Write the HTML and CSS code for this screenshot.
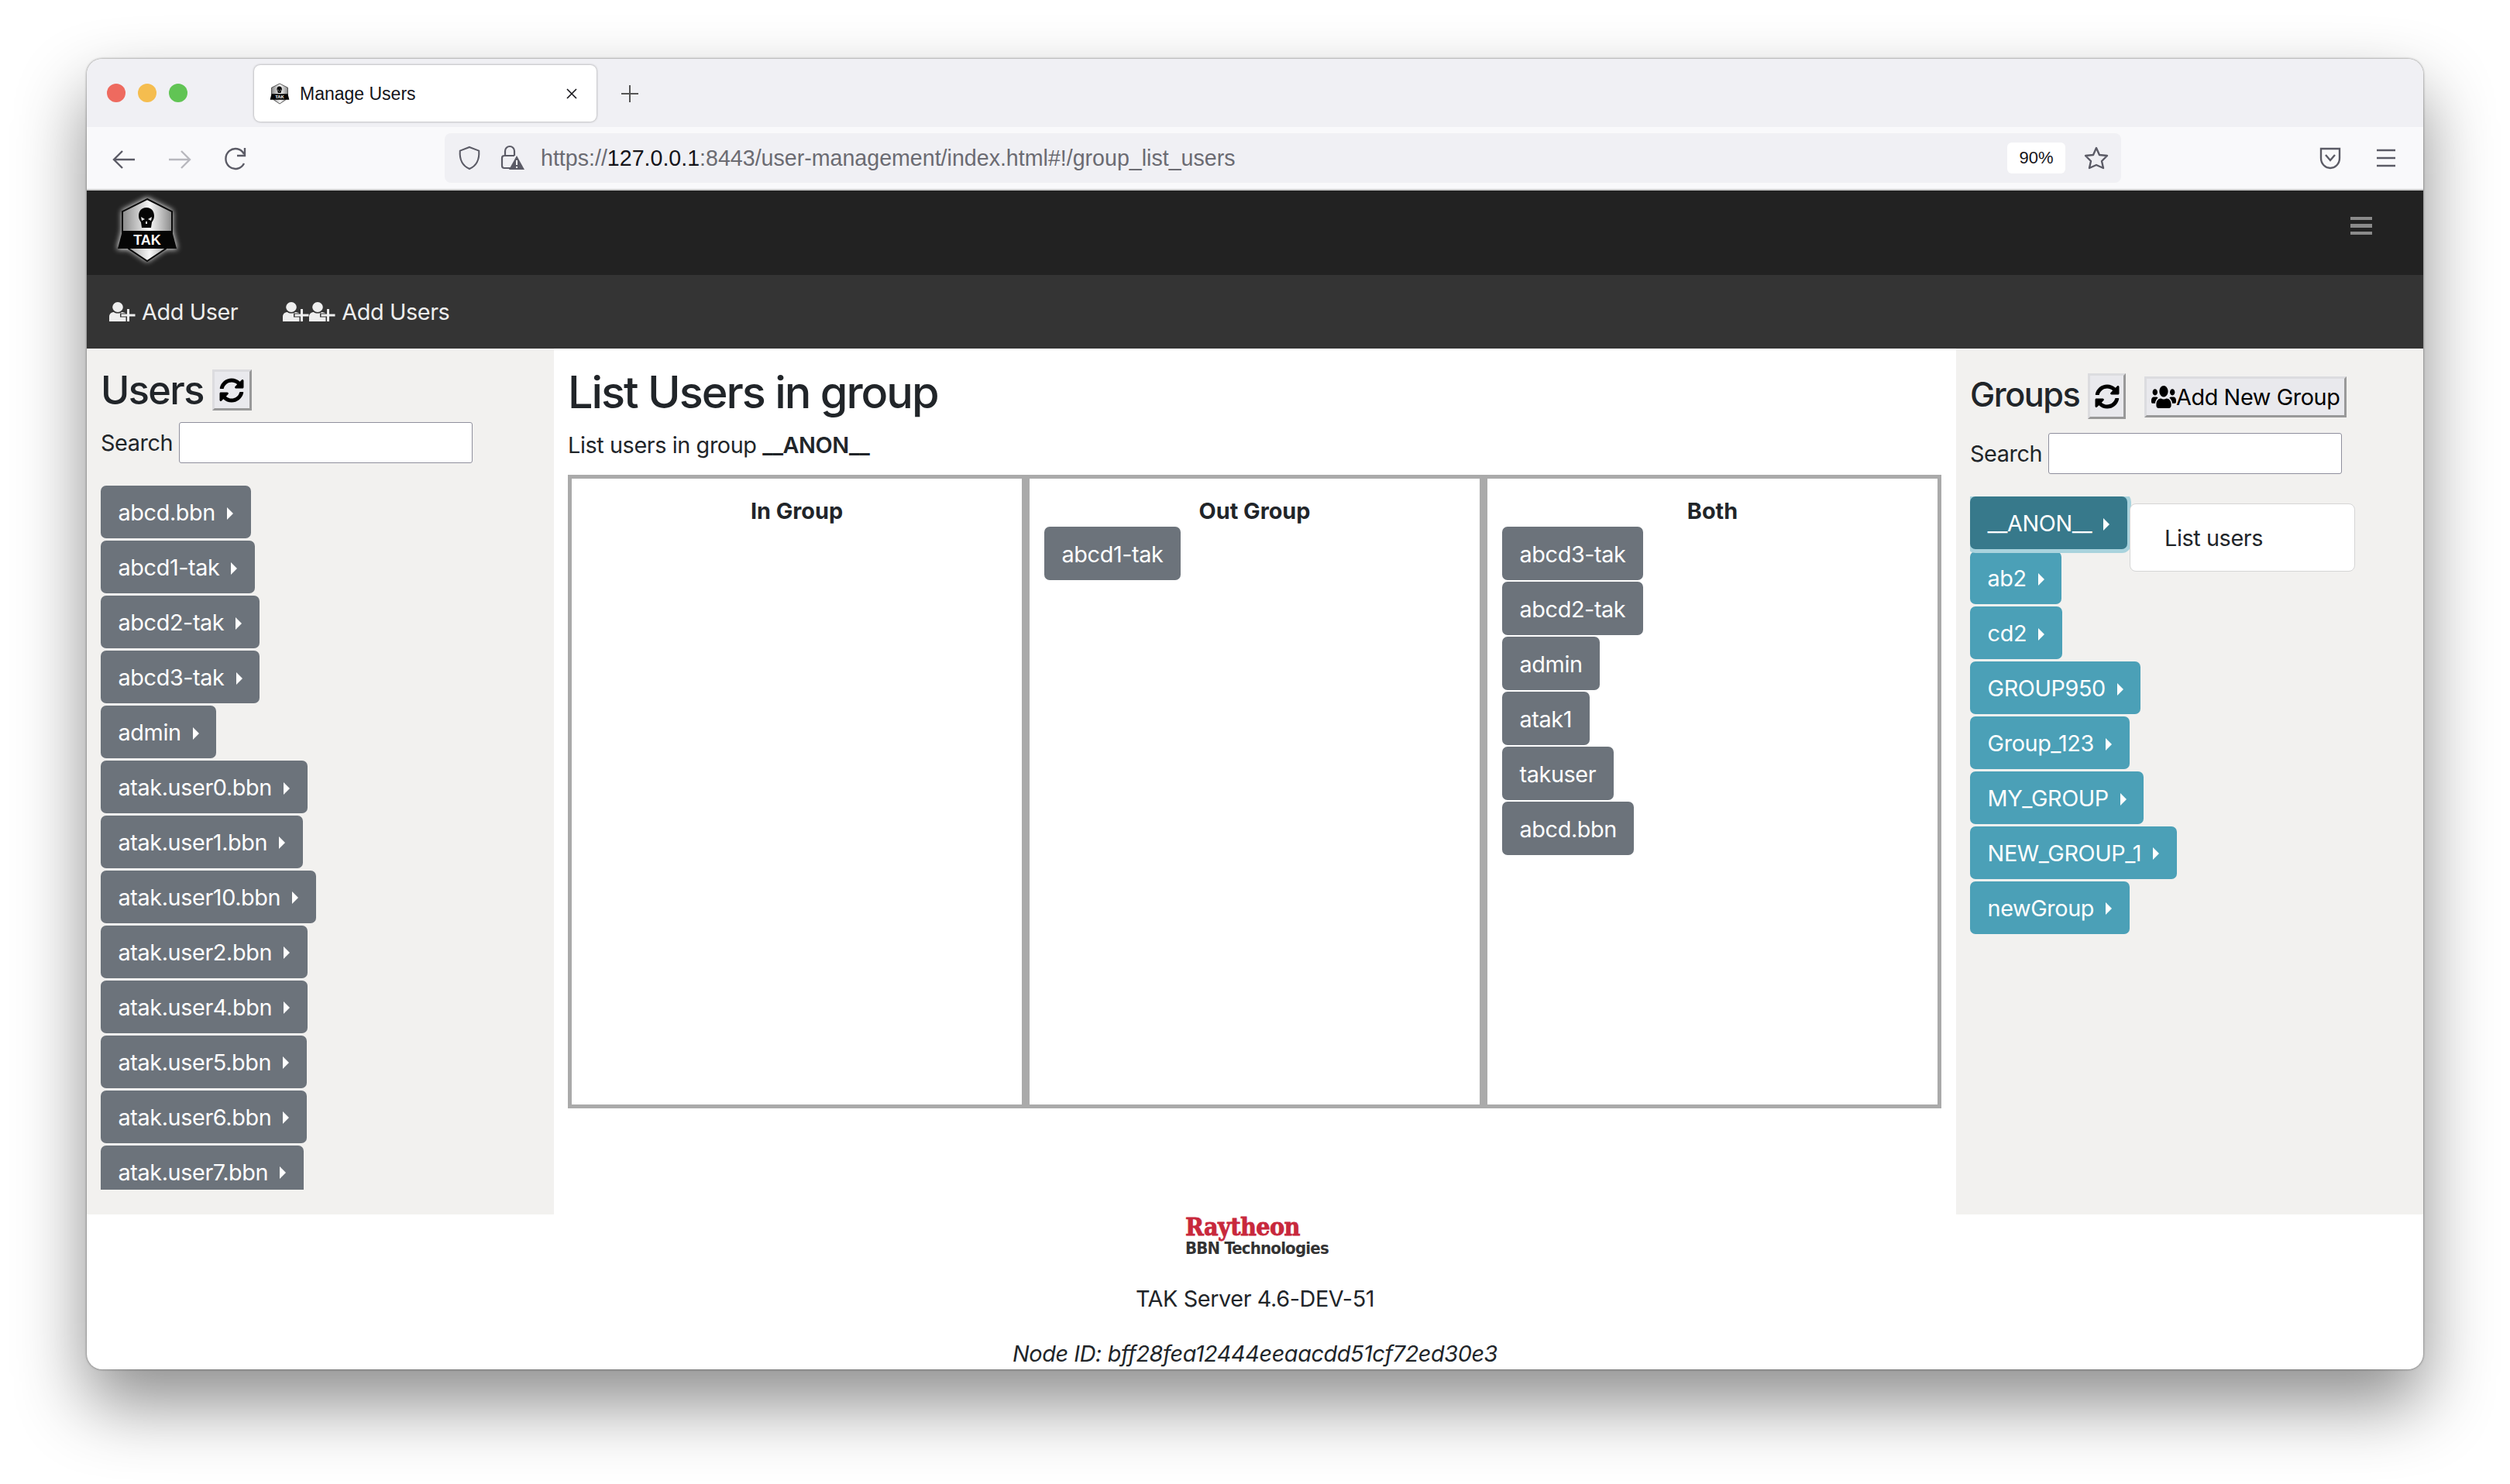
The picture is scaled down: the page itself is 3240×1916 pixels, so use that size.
FILE: index.html
```html
<!DOCTYPE html>
<html lang="en">
<head>
    <meta charset="UTF-8">
    <title>Manage Users</title>
    <link rel="stylesheet" href="styles.css">
</head>
<body>
<svg class="sprites" width="0" height="0">
    <defs>
        <linearGradient id="shield-fill" x1="0" y1="0" x2="1" y2="0">
            <stop offset="0" stop-color="#8a8a8a"/>
            <stop offset=".55" stop-color="#f8f8f8"/>
            <stop offset="1" stop-color="#8a8a8a"/>
        </linearGradient>
        <filter id="logo-glow" x="-30%" y="-30%" width="160%" height="160%">
            <feGaussianBlur stdDeviation="3.5"/>
        </filter>
        <symbol id="i-refresh" viewBox="0 0 512 512"><path d="M370.72 133.28C339.458 104.008 298.888 87.962 255.848 88c-77.458.068-144.328 53.178-162.791 126.85-1.344 5.363-6.122 9.15-11.651 9.15H24.103c-7.498 0-13.194-6.807-11.807-14.176C33.933 94.924 134.813 8 256 8c66.448 0 126.791 26.136 171.315 68.685L463.03 40.97C478.149 25.851 504 36.559 504 57.941V192c0 13.255-10.745 24-24 24H345.941c-21.382 0-32.09-25.851-16.971-40.971l41.75-41.749zM32 296h134.059c21.382 0 32.09 25.851 16.971 40.971l-41.75 41.75c31.262 29.273 71.835 45.319 114.876 45.28 77.418-.07 144.315-53.144 162.787-126.849 1.344-5.363 6.122-9.15 11.651-9.15h57.304c7.498 0 13.194 6.807 11.807 14.176C478.067 417.076 377.187 504 256 504c-66.448 0-126.791-26.136-171.315-68.685L48.97 471.03C33.851 486.149 8 475.441 8 454.059V320c0-13.255 10.745-24 24-24z"/></symbol>
        <symbol id="i-user-plus" viewBox="0 0 34 25">
            <ellipse cx="11" cy="6.5" rx="6.8" ry="6.5"/>
            <path d="M0 25 V19 C0 15 3 13 6 13 C8 15 14 15 16 13 C18 13 20 13.5 21 14.5 H14 V19.5 H21.5 V25 Z"/>
            <path d="M23 9 h3 v6.5 h7.5 v3 h-7.5 v6.5 h-3 v-6.5 h-7.5 v-3 h7.5 z"/>
        </symbol>
        <symbol id="i-users" viewBox="0 0 640 512" preserveAspectRatio="none"><path d="M96 224c35.3 0 64-28.7 64-64s-28.7-64-64-64-64 28.7-64 64 28.7 64 64 64zm448 0c35.3 0 64-28.7 64-64s-28.7-64-64-64-64 28.7-64 64 28.7 64 64 64zm32 32h-64c-17.6 0-33.5 7.1-45.1 18.6 40.3 22.1 68.9 62 75.1 109.4h66c17.7 0 32-14.3 32-32v-32c0-35.3-28.7-64-64-64zm-256 0c61.9 0 112-50.1 112-112S381.9 32 320 32 208 82.1 208 144s50.1 112 112 112zm76.8 32h-8.3c-20.8 10-43.9 16-68.5 16s-47.6-6-68.5-16h-8.3C179.6 288 128 339.6 128 403.2V432c0 26.5 21.5 48 48 48h288c26.5 0 48-21.5 48-48v-28.8c0-63.6-51.6-115.2-115.2-115.2zm-223.7-13.4C161.5 263.1 145.6 256 128 256H64c-35.3 0-64 28.7-64 64v32c0 17.7 14.3 32 32 32h65.9c6.3-47.4 34.9-87.3 75.2-109.4z"/></symbol>
        <symbol id="i-tak" viewBox="-8 -8 92 98">
            <path d="M38 -1 L71 16 L71 42 L77 66 L62 66 L38 82 L14 66 L-1 66 L5 42 L5 16 Z" fill="#fff" filter="url(#logo-glow)" opacity=".9"/>
            <path d="M38 1 L70 17 L70 44 L62 65 L38 81 L14 65 L6 44 L6 17 Z" fill="url(#shield-fill)" stroke="#0a0a0a" stroke-width="2"/>
            <path d="M37 12 C30 12 27 17 27 23 C27 27 29 29 30 31 L31 38 L43 38 L44 31 C45 29 47 27 47 23 C47 17 44 12 37 12 Z" fill="#050505"/>
            <path d="M30 24 L35 27 L31 29 Z M44 24 L39 27 L43 29 Z" fill="#e4e4e4"/>
            <path d="M36 30 L38 30 L38 33 L36 33 Z" fill="#e4e4e4"/>
            <path d="M6 42 L70 42 L76 65 L0 65 Z" fill="#050505"/>
            <text x="38" y="60" class="logo-tak">TAK</text>
        </symbol>
    </defs>
</svg>

<div class="window">
    <div class="tabbar">
        <div class="lights">
            <span class="light light--red"></span>
            <span class="light light--yellow"></span>
            <span class="light light--green"></span>
        </div>
        <div class="tab">
            <svg class="tab__icon"><use href="#i-tak"/></svg>
            <span class="tab__title">Manage Users</span>
            <svg class="tab__close" viewBox="0 0 16 16"><path d="M2 2 L14 14 M14 2 L2 14"/></svg>
        </div>
        <svg class="tab__new" viewBox="0 0 24 24"><path d="M12 1 V23 M1 12 H23"/></svg>
    </div>

    <div class="toolbar">
        <svg class="tool tool--back" viewBox="0 0 32 32"><path d="M30 16 H3 M14 5 L3 16 L14 27"/></svg>
        <svg class="tool tool--forward" viewBox="0 0 32 32"><path d="M2 16 H29 M18 5 L29 16 L18 27"/></svg>
        <svg class="tool tool--reload" viewBox="0 0 32 32"><path d="M27 21 A12.5 13 0 1 1 27 9 M28 1 V11 H18"/></svg>
        <div class="urlbar">
            <svg class="urlbar__shield" viewBox="0 0 32 34"><path d="M16 2 L29 7 C30 20 25 28 16 32 C7 28 2 20 3 7 Z"/></svg>
            <svg class="urlbar__lock" viewBox="0 0 32 34">
                <path class="lock-line" d="M7 14 V8 A6 6 0 0 1 19 8 V14 M14 30 H6 A3 3 0 0 1 3 27 V17 A3 3 0 0 1 6 14 H19"/>
                <path class="lock-warn" d="M22 14 L32 32 H12 Z"/>
                <path class="lock-mark" d="M22 20 V26 M22 28 V30"/>
            </svg>
            <span class="urlbar__text">https://<b class="urlbar__host">127.0.0.1</b>:8443/user-management/index.html#!/group_list_users</span>
            <span class="urlbar__zoom">90%</span>
            <svg class="urlbar__star" viewBox="0 0 32 32"><path d="M16 3 L20 12 L30 13 L23 20 L25 29 L16 25 L7 29 L9 20 L2 13 L12 12 Z"/></svg>
        </div>
        <svg class="tool tool--pocket" viewBox="0 0 32 32"><path d="M4 4 H28 V16 C28 24 22 29 16 29 C10 29 4 24 4 16 Z M10 12 L16 19 L22 12"/></svg>
        <svg class="tool tool--menu" viewBox="0 0 32 32"><path d="M4 6 H28 M4 16 H28 M4 26 H28"/></svg>
    </div>

    <nav class="navbar">
        <svg class="navbar__logo"><use href="#i-tak"/></svg>
        <div class="navbar__toggle"><span></span><span></span><span></span></div>
    </nav>
    <div class="subnav">
        <a class="subnav__link"><svg class="icon-user"><use href="#i-user-plus"/></svg> Add User</a>
        <a class="subnav__link"><svg class="icon-user"><use href="#i-user-plus"/></svg><svg class="icon-user"><use href="#i-user-plus"/></svg> Add Users</a>
    </div>

    <div class="content">
        <aside class="side side--users">
            <div class="side__head">
                <h3 class="side__title">Users</h3>
                <button class="native-btn native-btn--icon"><svg class="icon-refresh"><use href="#i-refresh"/></svg></button>
            </div>
            <div class="search"><label>Search</label><input class="search__input" type="text"></div>
            <div class="btn-list btn-list--clip">
                <a class="btn">abcd.bbn <i class="caret"></i></a>
                <a class="btn">abcd1-tak <i class="caret"></i></a>
                <a class="btn">abcd2-tak <i class="caret"></i></a>
                <a class="btn">abcd3-tak <i class="caret"></i></a>
                <a class="btn">admin <i class="caret"></i></a>
                <a class="btn">atak.user0.bbn <i class="caret"></i></a>
                <a class="btn">atak.user1.bbn <i class="caret"></i></a>
                <a class="btn">atak.user10.bbn <i class="caret"></i></a>
                <a class="btn">atak.user2.bbn <i class="caret"></i></a>
                <a class="btn">atak.user4.bbn <i class="caret"></i></a>
                <a class="btn">atak.user5.bbn <i class="caret"></i></a>
                <a class="btn">atak.user6.bbn <i class="caret"></i></a>
                <a class="btn">atak.user7.bbn <i class="caret"></i></a>
            </div>
        </aside>

        <main class="main">
            <h2 class="main__title">List Users in group</h2>
            <p class="main__sub">List users in group <b>__ANON__</b></p>
            <div class="columns">
                <section class="column">
                    <h4 class="column__title">In Group</h4>
                </section>
                <section class="column">
                    <h4 class="column__title">Out Group</h4>
                    <div class="btn-list">
                        <a class="btn">abcd1-tak</a>
                    </div>
                </section>
                <section class="column">
                    <h4 class="column__title">Both</h4>
                    <div class="btn-list">
                        <a class="btn">abcd3-tak</a>
                        <a class="btn">abcd2-tak</a>
                        <a class="btn">admin</a>
                        <a class="btn">atak1</a>
                        <a class="btn">takuser</a>
                        <a class="btn">abcd.bbn</a>
                    </div>
                </section>
            </div>
        </main>

        <aside class="side side--groups">
            <div class="side__head side__head--groups">
                <h4 class="side__title side__title--small">Groups</h4>
                <button class="native-btn native-btn--icon native-btn--tall"><svg class="icon-refresh"><use href="#i-refresh"/></svg></button>
                <button class="native-btn native-btn--add"><svg class="icon-users"><use href="#i-users"/></svg>Add New Group</button>
            </div>
            <div class="search search--groups"><label>Search</label><input class="search__input" type="text"></div>
            <div class="btn-list btn-list--groups">
                <a class="btn btn--info btn--active">__ANON__ <i class="caret"></i></a>
                <a class="btn btn--info">ab2 <i class="caret"></i></a>
                <a class="btn btn--info">cd2 <i class="caret"></i></a>
                <a class="btn btn--info">GROUP950 <i class="caret"></i></a>
                <a class="btn btn--info">Group_123 <i class="caret"></i></a>
                <a class="btn btn--info">MY_GROUP <i class="caret"></i></a>
                <a class="btn btn--info">NEW_GROUP_1 <i class="caret"></i></a>
                <a class="btn btn--info">newGroup <i class="caret"></i></a>
                <div class="dropdown">List users</div>
            </div>
        </aside>
    </div>

    <footer class="footer">
        <div class="brand">
            <span class="brand__top">Raytheon</span>
            <span class="brand__bottom">BBN Technologies</span>
        </div>
        <p class="footer__version">TAK Server 4.6-DEV-51</p>
        <p class="footer__node">Node ID: bff28fea12444eeaacdd51cf72ed30e3</p>
    </footer>
</div>
</body>
</html>
```

FILE: styles.css
```css
* {
    box-sizing: border-box;
}
html, body {
    margin: 0;
    height: 100%;
}
body {
    background: #fff;
    font-family: Inter, "Liberation Sans", sans-serif;
    font-size: 28.8px;
    line-height: 1.5;
    letter-spacing: -.4px;
    color: #212529;
    padding: 76px 112px 0;
    overflow: hidden;
}
.sprites {
    position: absolute;
}
.window {
    width: 3016px;
    height: 1692px;
    background: #fff;
    border-radius: 20px;
    overflow: hidden;
    box-shadow: 0 44px 90px rgba(0, 0, 0, .45), 0 0 3px rgba(0, 0, 0, .55);
}

/* browser chrome */
.tabbar {
    height: 88px;
    background: #f0f0f4;
    display: flex;
    align-items: flex-start;
}
.lights {
    display: flex;
    gap: 16px;
    padding: 32px 0 0 26px;
    width: 216px;
}
.light {
    width: 24px;
    height: 24px;
    border-radius: 50%;
}
.light--red { background: #ee6a5f; }
.light--yellow { background: #f5bd4f; }
.light--green { background: #61c454; }
.tab {
    width: 442px;
    height: 73px;
    margin-top: 8px;
    background: #fff;
    border-radius: 8px;
    box-shadow: 0 0 3px rgba(0, 0, 0, .4);
    display: flex;
    align-items: center;
    padding: 0 24px 0 18px;
    font-family: "Liberation Sans", sans-serif;
    font-size: 23px;
    letter-spacing: 0;
    color: #15141a;
}
.tab__icon {
    width: 30px;
    height: 32px;
    margin-right: 11px;
}
.tab__title {
    flex: 1;
    padding-top: 2px;
}
.tab__close {
    width: 16px;
    height: 16px;
}
.tab__close path, .tab__new path {
    stroke: #15141a;
    stroke-width: 1.6;
    fill: none;
}
.tab__new {
    width: 24px;
    height: 24px;
    margin: 33px 0 0 31px;
}
.tab__new path {
    stroke: #555;
    stroke-width: 2;
}
.toolbar {
    height: 82px;
    background: #f9f9fb;
    border-bottom: 2px solid #ccc;
    display: flex;
    align-items: center;
    padding: 0 0 0 32px;
}
.tool {
    width: 32px;
    height: 32px;
    flex: none;
}
.tool path {
    fill: none;
    stroke: #5b5b66;
    stroke-width: 2.4;
}
.tool--back, .tool--forward, .tool--reload {
    margin-top: 3px;
}
.tool--forward {
    margin-left: 40px;
}
.tool--forward path {
    stroke: #b8b8be;
}
.tool--reload {
    margin-left: 40px;
}
.urlbar {
    width: 2164px;
    height: 64px;
    margin-left: 254px;
    background: #f0f0f4;
    border-radius: 8px;
    display: flex;
    align-items: center;
    padding: 0 16px 0 17px;
    color: #6b6b72;
    font-family: "Liberation Sans", sans-serif;
    font-size: 28.6px;
    letter-spacing: 0;
    flex: none;
}
.urlbar__shield {
    width: 30px;
    height: 32px;
    fill: none;
    stroke: #5b5b66;
    stroke-width: 2.2;
}
.urlbar__lock {
    width: 32px;
    height: 34px;
    margin-left: 24px;
}
.lock-line {
    fill: none;
    stroke: #5b5b66;
    stroke-width: 2.2;
}
.lock-warn {
    fill: #5b5b66;
}
.lock-mark {
    stroke: #fff;
    stroke-width: 2;
}
.urlbar__text {
    flex: 1;
    margin-left: 21px;
    white-space: nowrap;
}
.urlbar__host {
    font-weight: normal;
    color: #15141a;
}
.urlbar__zoom {
    width: 75px;
    height: 40px;
    background: #fff;
    border-radius: 6px;
    color: #15141a;
    font-size: 22px;
    line-height: 40px;
    text-align: center;
}
.urlbar__star {
    width: 32px;
    height: 32px;
    margin-left: 24px;
    fill: none;
    stroke: #5b5b66;
    stroke-width: 2.4;
    stroke-linejoin: round;
}
.tool--pocket {
    margin-left: 254px;
}
.tool--menu {
    margin-left: 40px;
}

/* app navbar */
.navbar {
    height: 109px;
    background: #222;
    display: flex;
    align-items: flex-start;
    justify-content: space-between;
    padding: 2px 66px 0 32px;
}
.navbar__logo {
    width: 92px;
    height: 98px;
}
.logo-tak {
    font-family: "Liberation Sans", sans-serif;
    font-size: 18px;
    font-weight: bold;
    letter-spacing: 0;
    fill: #fff;
    text-anchor: middle;
}
.navbar__toggle {
    width: 28px;
    margin-top: 32px;
    display: flex;
    flex-direction: column;
    gap: 5px;
}
.navbar__toggle span {
    height: 4.3px;
    background: #8a8a8a;
}
.subnav {
    height: 95px;
    background: #343434;
    display: flex;
    align-items: center;
    gap: 58px;
    padding: 0 0 0 29px;
}
.subnav__link {
    color: #eee;
    display: flex;
    align-items: center;
}
.icon-user {
    width: 34px;
    height: 25px;
    fill: #eee;
}
.subnav__link svg:last-of-type {
    margin-right: 8px;
}

/* page body */
.content {
    height: 1118px;
    display: flex;
}
.side {
    background: #f2f1ef;
    padding: 0 18px;
    flex: none;
}
.side--users {
    width: 603px;
}
.side--groups {
    width: 603px;
}
.side__head {
    display: flex;
    align-items: flex-start;
    height: 95px;
    padding-top: 27px;
}
.side__title {
    margin: 0;
    font-size: 50.4px;
    font-weight: 500;
    line-height: 1.2;
    letter-spacing: -1.6px;
    margin-top: -3px;
}
.side__title--small {
    font-size: 43.2px;
    letter-spacing: -1.5px;
    margin-top: 2px;
}
.side__head--groups {
    padding-top: 32px;
}
.native-btn {
    background: #e9e9ed;
    border: 3px solid;
    border-color: #dcdcdf #999 #999 #dcdcdf;
    padding: 0;
    display: flex;
    align-items: center;
    justify-content: center;
    color: #000;
    font: inherit;
    letter-spacing: inherit;
}
.native-btn--icon {
    width: 51px;
    height: 53px;
    margin-left: 11px;
}
.native-btn--tall {
    width: 49px;
    height: 59px;
    margin-left: 11px;
}
.native-btn--add {
    width: 261px;
    height: 53px;
    margin: 4px 0 0 24px;
}
.icon-refresh {
    width: 32px;
    height: 32px;
}
.icon-users {
    width: 32px;
    height: 33px;
}
.search {
    display: flex;
    align-items: center;
    gap: 8px;
    height: 53px;
}
.search--groups {
    margin-top: 14px;
}
.search__input {
    width: 379px;
    height: 53px;
    background: #fff;
    border: 1px solid #8f8f9d;
    border-radius: 3px;
}
.btn-list {
    display: flex;
    flex-direction: column;
    align-items: flex-start;
    gap: 2.6px;
}
.btn-list--clip {
    margin-top: 29px;
    height: 909px;
    overflow: hidden;
}
.btn-list--groups {
    margin-top: 29px;
    position: relative;
}
.btn {
    flex: none;
    height: 68.4px;
    padding: 12.3px 21.6px 9.3px;
    border: 1.8px solid transparent;
    border-radius: 7px;
    background: #6c737b;
    color: #fff;
    white-space: pre;
}
.btn--info {
    background: #4ba0b7;
}
.btn--active {
    background: #37798b;
    box-shadow: 0 0 0 5px #a9d3dd;
    clip-path: inset(0 -6px -6px 0);
    border-radius: 7px;
}
.caret {
    display: inline-block;
    margin-left: .255em;
    vertical-align: .06em;
    border-left: .3em solid;
    border-top: .3em solid transparent;
    border-bottom: .3em solid transparent;
}
.dropdown {
    position: absolute;
    left: 206px;
    top: 9px;
    width: 291px;
    height: 88px;
    padding: 22px 44px;
    background: #fff;
    border: 1px solid #d5d5d5;
    border-radius: 8px;
}
.main {
    flex: 1;
    padding: 0 19px 0 18px;
}
.main__title {
    margin: 0;
    padding-top: 22px;
    font-size: 57.6px;
    font-weight: 500;
    line-height: 1.2;
    letter-spacing: -2px;
}
.main__sub {
    margin: 0;
    padding-top: 12px;
}
.main__sub b {
    font-weight: 600;
}
.columns {
    margin-top: 17px;
    display: flex;
    height: 818px;
}
.column {
    flex: 1;
    border: 5px solid #aaa;
    padding: 0 19px;
}
.column__title {
    margin: 0;
    padding-top: 20px;
    height: 62px;
    font-size: 28.8px;
    font-weight: 700;
    line-height: 1.5;
    letter-spacing: 0;
    text-align: center;
}

/* footer */
.footer {
    text-align: center;
    padding-top: 0;
}
.brand {
    display: flex;
    flex-direction: column;
    align-items: flex-start;
    width: 180px;
    margin: 0 auto;
    line-height: 1;
}
.brand__top {
    color: #c8283c;
    font-family: "DejaVu Serif Condensed", "DejaVu Serif", serif;
    font-size: 32px;
    font-weight: bold;
    letter-spacing: -.6px;
    -webkit-text-stroke: .8px #c8283c;
    height: 33px;
}
.brand__bottom {
    color: #333;
    font-family: "DejaVu Sans Condensed", "DejaVu Sans", sans-serif;
    font-size: 22px;
    font-weight: bold;
    white-space: nowrap;
    letter-spacing: -.8px;
}
.footer p {
    margin: 0;
}
.footer__version {
    padding-top: 32px;
}
.footer__node {
    padding-top: 28px;
    font-style: italic;
}
```
